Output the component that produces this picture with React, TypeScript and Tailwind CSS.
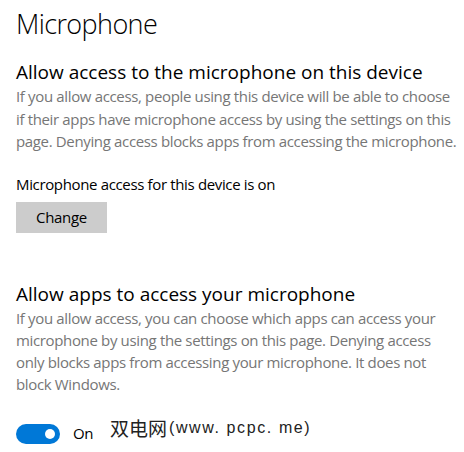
import React from "react";

export default function App() {
  return (
    <div
      className="w-[464px] h-[452px] bg-white overflow-hidden pl-[16px] pr-[4px] relative"
      style={{ fontFamily: '"Open Sans", "Noto Sans", sans-serif' }}
    >
      <h1 className="text-[27px] leading-[36px] font-light text-black pt-[6px] tracking-[-0.6px]">
        Microphone
      </h1>
      <h2 className="text-[19px] leading-[26px] text-black mt-[17px]">
        Allow access to the microphone on this device
      </h2>
      <p className="text-[15px] leading-[22.5px] text-[#767676] tracking-[-0.35px]">
        If you allow access, people using this device will be able to choose if their apps have microphone access by using the settings on this page. Denying access blocks apps from accessing the microphone.
      </p>
      <p className="text-[15px] leading-[20px] text-black mt-[21px] tracking-[-0.35px]">
        Microphone access for this device is on
      </p>
      <button className="block mt-[8px] w-[91px] h-[31px] bg-[#cccccc] text-[15px] text-black tracking-[-0.3px]">
        Change
      </button>
      <h2 className="text-[19px] leading-[26px] text-black mt-[48px]">
        Allow apps to access your microphone
      </h2>
      <p className="text-[15px] leading-[22px] text-[#767676] tracking-[-0.35px]">
        If you allow access, you can choose which apps can access your microphone by using the settings on this page. Denying access only blocks apps from accessing your microphone. It does not block Windows.
      </p>
      <div className="flex items-center mt-[29px] h-[20px]">
        <div className="w-[44px] h-[20px] rounded-full bg-[#0078d7] relative">
          <div className="absolute right-[5px] top-[5px] w-[10px] h-[10px] rounded-full bg-white" />
        </div>
        <span className="ml-[13px] text-[15px] text-black tracking-[-0.3px]">On</span>
      </div>
      <div className="absolute left-[110px] top-[416px] flex items-center h-[24px] text-[#222]">
        <span className="text-[19px] leading-[24px]" style={{ fontFamily: '"Noto Sans CJK SC", sans-serif' }}>
          双电网
        </span>
        <span
          className="text-[16px] leading-[24px] text-[#222] tracking-[1.6px] ml-[2px]"
          style={{ fontFamily: '"Liberation Sans", sans-serif' }}
        >
          (www. pcpc. me)
        </span>
      </div>
    </div>
  );
}
